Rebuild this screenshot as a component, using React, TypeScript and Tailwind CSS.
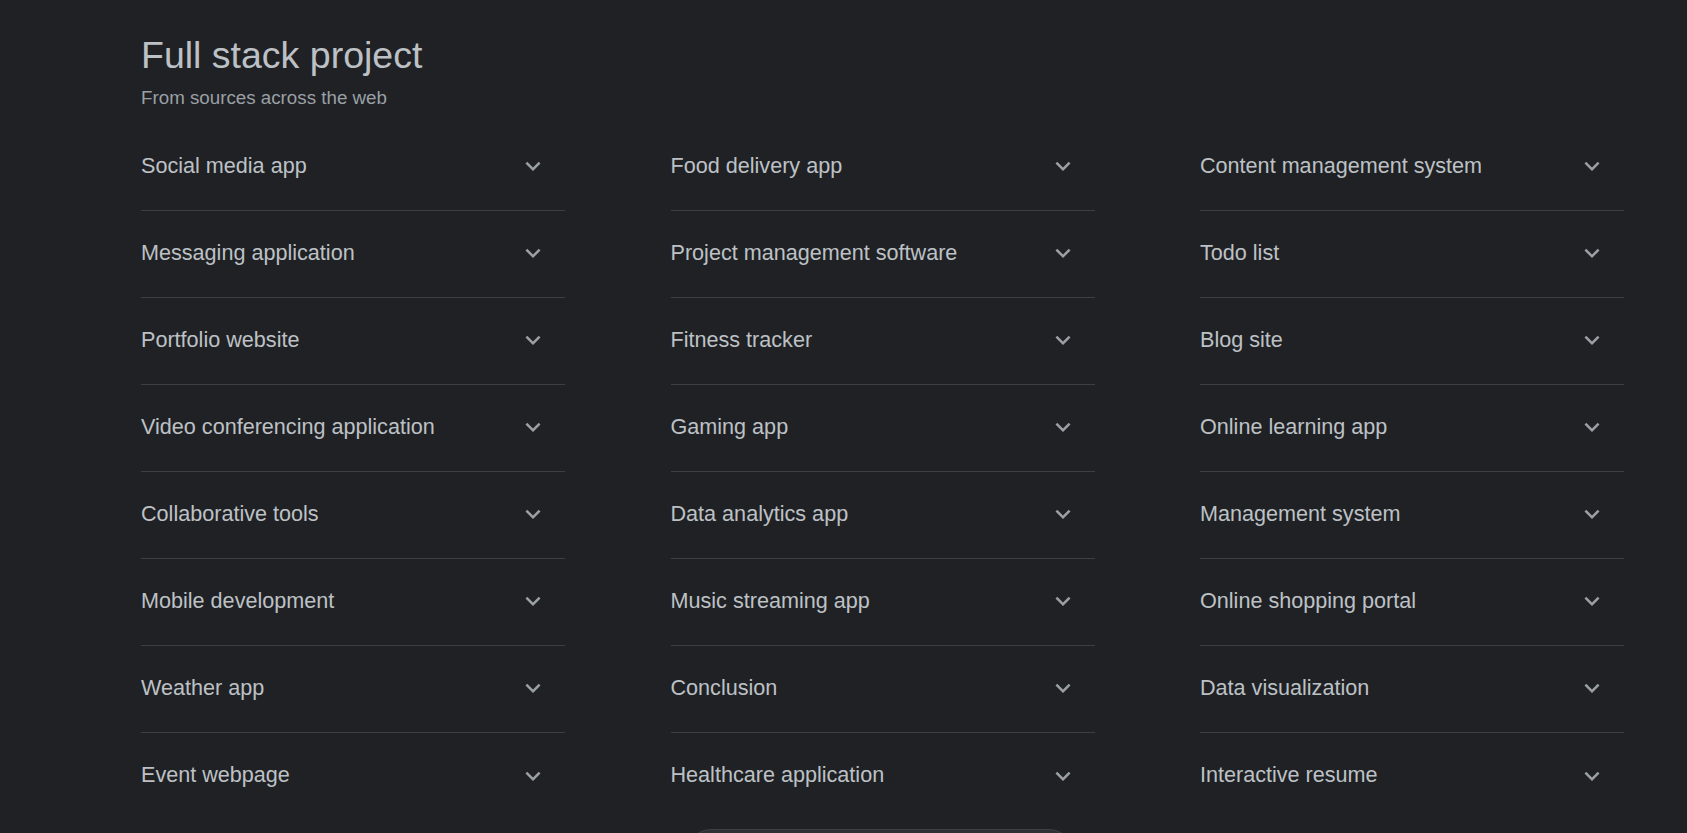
const columns: string[][] = [
  [
    'Social media app',
    'Messaging application',
    'Portfolio website',
    'Video conferencing application',
    'Collaborative tools',
    'Mobile development',
    'Weather app',
    'Event webpage',
  ],
  [
    'Food delivery app',
    'Project management software',
    'Fitness tracker',
    'Gaming app',
    'Data analytics app',
    'Music streaming app',
    'Conclusion',
    'Healthcare application',
  ],
  [
    'Content management system',
    'Todo list',
    'Blog site',
    'Online learning app',
    'Management system',
    'Online shopping portal',
    'Data visualization',
    'Interactive resume',
  ],
];

function ExpandMore() {
  return (
    <svg viewBox="0 0 24 24" className="size-[30px] shrink-0 fill-[#9aa0a6]">
      <path d="M16.59 8.59L12 13.17 7.41 8.59 6 10l6 6 6-6z" />
    </svg>
  );
}

function Row({ label, last }: { label: string; last: boolean }) {
  return (
    <div
      className={
        'flex h-[87px] items-center justify-between pb-[2px] pr-[17px] ' +
        (last ? '' : 'border-b border-[#3c4043]')
      }
    >
      <span className="text-[21.6px] text-[#bdc1c6]">{label}</span>
      <ExpandMore />
    </div>
  );
}

export default function App() {
  return (
    <div className="min-h-screen bg-[#202124] font-['Liberation_Sans',Arial,sans-serif]">
      <div className="pl-[141px] pt-[31px]">
        <h1 className="text-[37.5px] leading-[48px] text-[#bdc1c6]">
          Full stack project
        </h1>
        <p className="mt-[7px] text-[18.75px] leading-[24px] text-[#9aa0a6]">
          From sources across the web
        </p>
        <div className="mt-[14px] grid w-[1483px] grid-cols-3 gap-x-[105.5px]">
          {columns.map((col, i) => (
            <div key={i} className="flex flex-col">
              {col.map((label, j) => (
                <Row key={label} label={label} last={j === col.length - 1} />
              ))}
            </div>
          ))}
        </div>
        <div className="mt-[9px] ml-[546px] h-[48px] w-[386px] rounded-full border border-[#3c4043] bg-[#303134]" />
      </div>
    </div>
  );
}
